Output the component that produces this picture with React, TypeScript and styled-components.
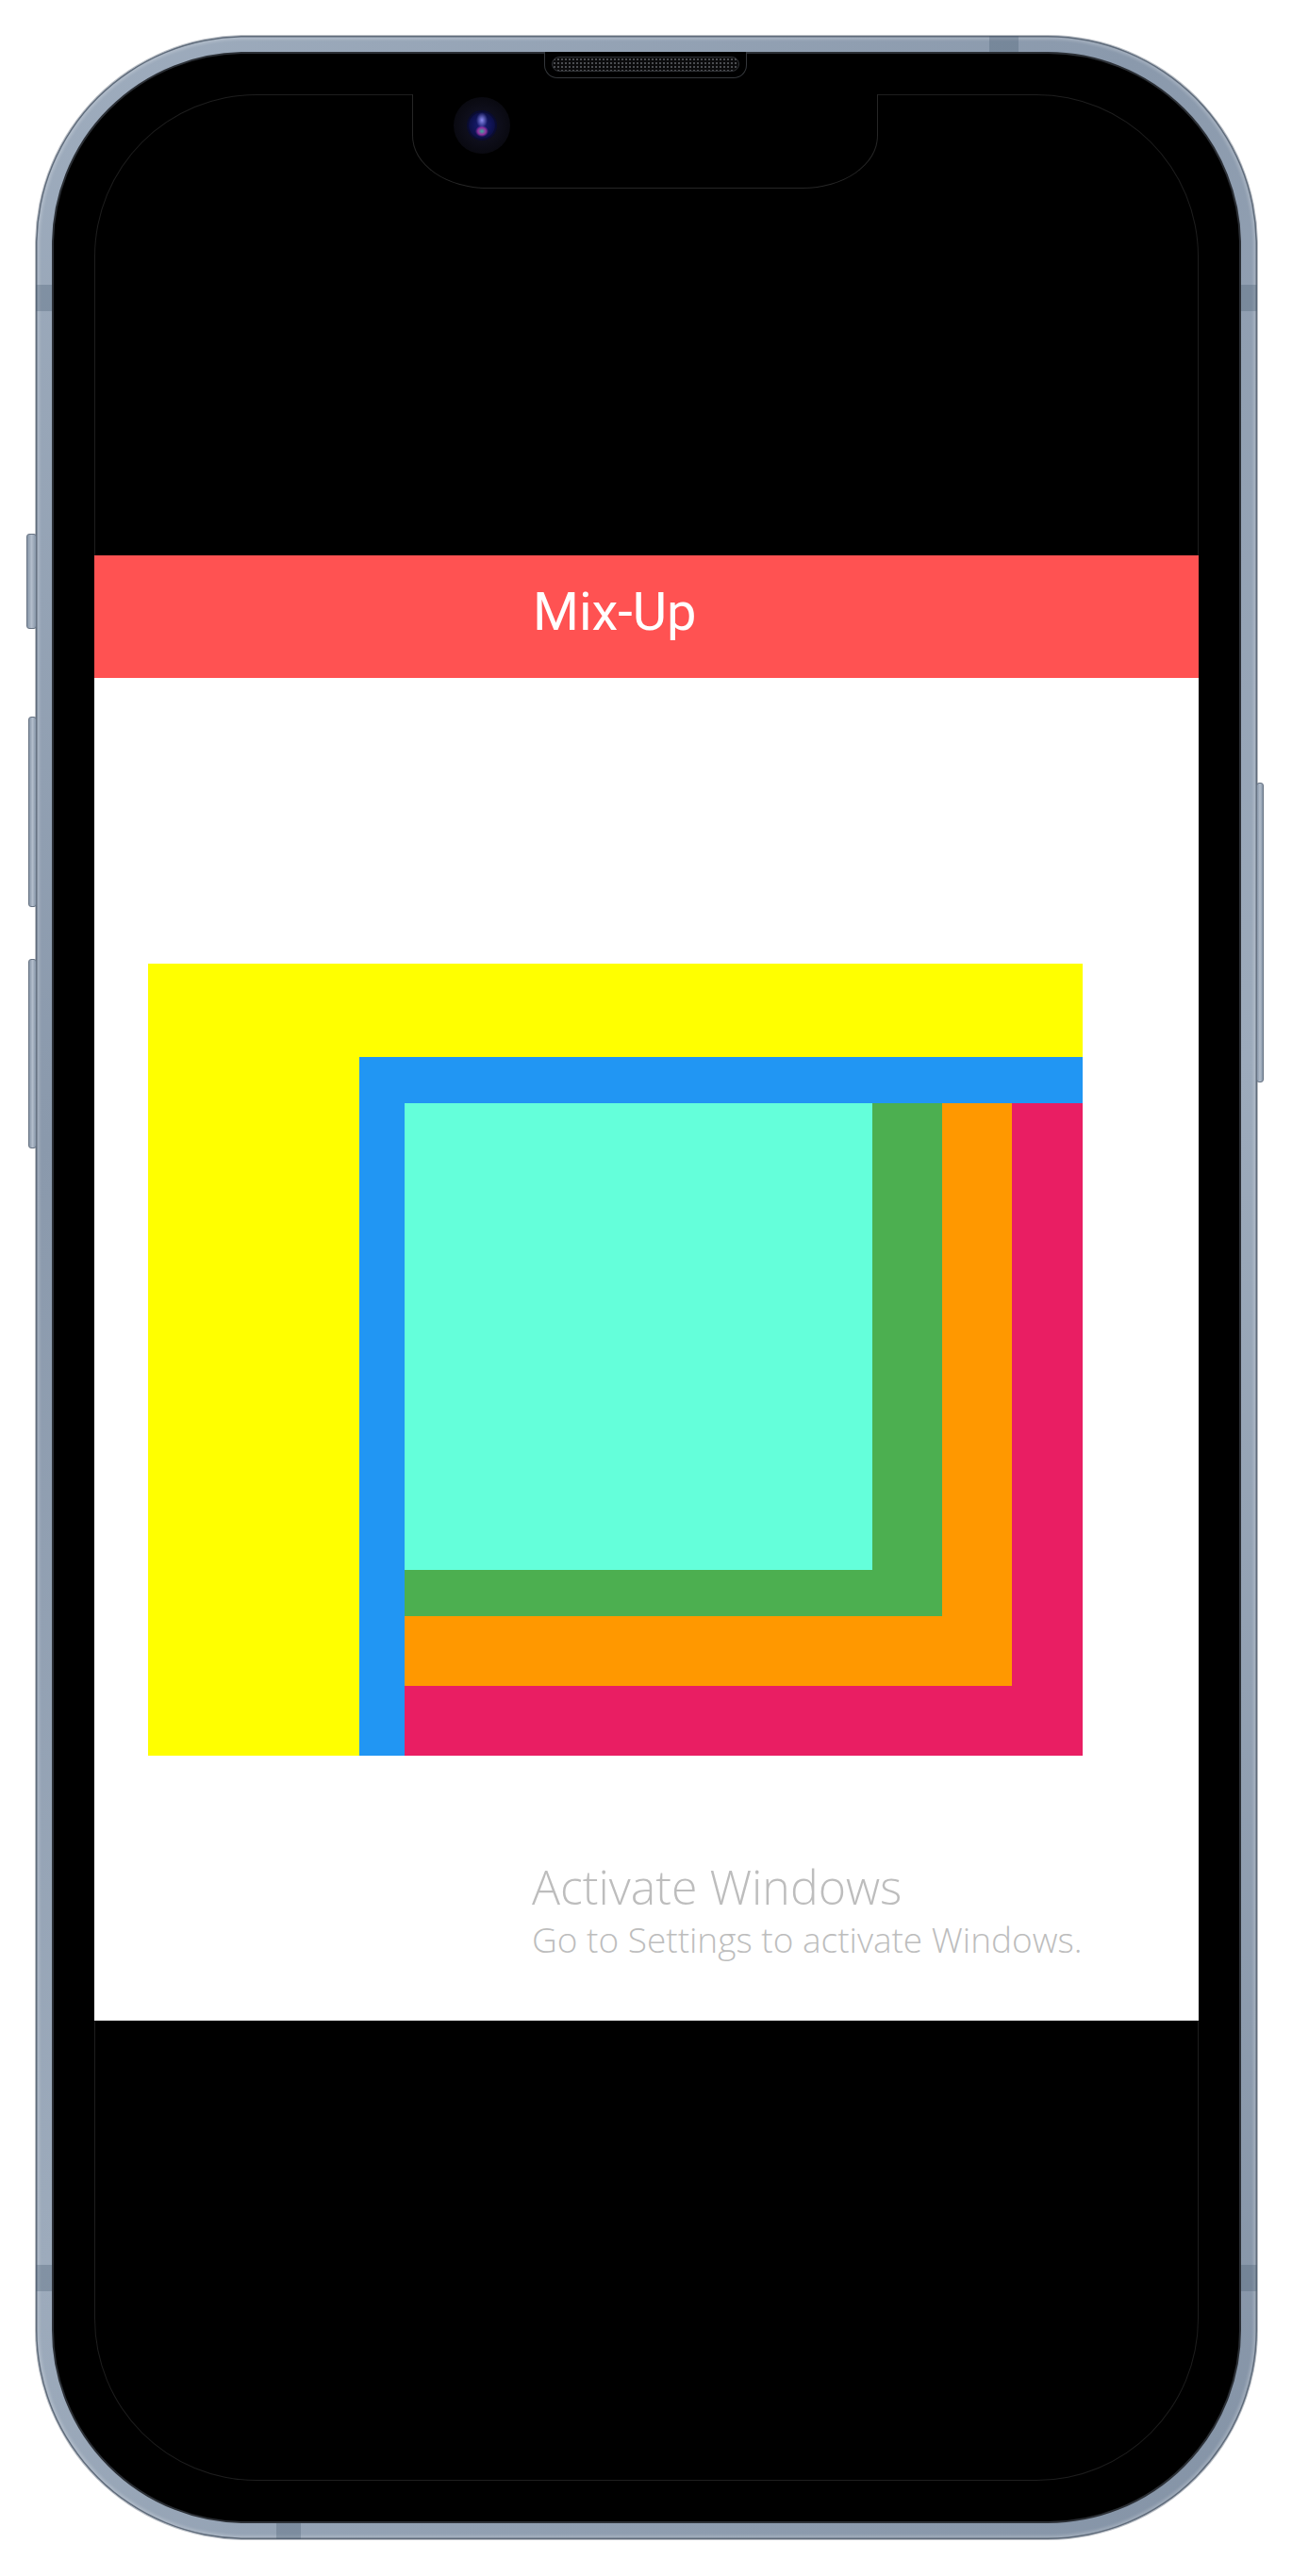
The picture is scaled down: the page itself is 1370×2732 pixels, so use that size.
import React from "react";
import { styled, createGlobalStyle } from "styled-components";

const GlobalStyle = createGlobalStyle`
  html, body {
    margin: 0;
    padding: 0;
    background: #ffffff;
  }

  body {
    width: 1370px;
    height: 2732px;
    overflow: hidden;
    font-family: Roboto, "Noto Sans", sans-serif;
  }
`;

const layers = [
  { color: "#E91E63", w: 719, h: 692 },
  { color: "#FF9800", w: 644, h: 618 },
  { color: "#4CAF50", w: 570, h: 544 },
  { color: "#64FFDA", w: 496, h: 495 },
];

const buttons = [
  { side: "left", offset: -10, width: 11, top: 528, height: 101 },
  { side: "left", offset: -8, width: 9, top: 722, height: 202 },
  { side: "left", offset: -8, width: 9, top: 979, height: 201 },
  { side: "right", offset: -7, width: 8, top: 792, height: 318 },
] as const;

const bands = [
  { top: 0, left: 1011, width: 31, height: 17 },
  { top: 264, left: 0, width: 17, height: 28 },
  { top: 264, left: 1278, width: 17, height: 28 },
  { top: 2364, left: 0, width: 17, height: 28 },
  { top: 2364, left: 1278, width: 17, height: 28 },
  { top: 2638, left: 255, width: 26, height: 17 },
];

// nests the coloured layers, each one pinned to the top-left of its parent
const renderLayers = (index: number): React.ReactNode => {
  const layer = layers[index];
  if (!layer) return null;
  return (
    <StyledLayer $color={layer.color} $w={layer.w} $h={layer.h}>
      {renderLayers(index + 1)}
    </StyledLayer>
  );
};

const App = () => {
  return (
    <>
      <GlobalStyle />
      <StyledPage>
        <StyledPhone>
          {buttons.map((b, i) => (
            <StyledSideButton
              key={i}
              $side={b.side}
              $offset={b.offset}
              $width={b.width}
              $top={b.top}
              $height={b.height}
            />
          ))}
          {bands.map((b, i) => (
            <StyledBand
              key={i}
              $top={b.top}
              $left={b.left}
              $width={b.width}
              $height={b.height}
            />
          ))}

          <StyledBezel>
            <StyledSpeaker>
              <StyledGrille />
            </StyledSpeaker>

            <StyledDisplay>
              <StyledNotch>
                <StyledCamera>
                  <StyledLens />
                </StyledCamera>
              </StyledNotch>

              <StyledApp>
                <StyledAppBar>
                  <StyledTitle>Mix-Up</StyledTitle>
                </StyledAppBar>

                <StyledBody>
                  <StyledOuter>
                    <StyledInset>{renderLayers(0)}</StyledInset>
                  </StyledOuter>

                  <StyledWatermark>
                    <StyledWatermarkTitle>Activate Windows</StyledWatermarkTitle>
                    <StyledWatermarkText>
                      Go to Settings to activate Windows.
                    </StyledWatermarkText>
                  </StyledWatermark>
                </StyledBody>
              </StyledApp>
            </StyledDisplay>
          </StyledBezel>
        </StyledPhone>
      </StyledPage>
    </>
  );
};

export default App;

const StyledPage = styled("div")`
  width: 1370px;
  height: 2732px;
  box-sizing: border-box;
  padding: 38px 0 0 38px;
  background: #ffffff;
`;

const StyledPhone = styled("div")`
  position: relative;
  width: 1295px;
  height: 2655px;
  box-sizing: border-box;
  padding: 17px;

  border-radius: 222px;
  background: linear-gradient(135deg, #9fadbe 0%, #8a99ac 30%, #9dabbc 60%, #8493a6 100%);
  box-shadow:
    inset 0 0 0 1.5px #5f6b7a,
    inset 0 0 3px 4px rgba(255, 255, 255, 0.2),
    0 0 0 1px rgba(80, 90, 105, 0.4);
`;

const StyledSideButton = styled("div")<{
  $side: "left" | "right";
  $offset: number;
  $width: number;
  $top: number;
  $height: number;
}>`
  position: absolute;
  ${(p) => p.$side}: ${(p) => p.$offset}px;
  top: ${(p) => p.$top}px;
  width: ${(p) => p.$width}px;
  height: ${(p) => p.$height}px;

  box-sizing: border-box;
  border: 1px solid #667282;
  border-radius: 3px;
  background: linear-gradient(90deg, #8796a8, #b2bdcb, #8796a8);
`;

const StyledBand = styled("div")<{
  $top: number;
  $left: number;
  $width: number;
  $height: number;
}>`
  position: absolute;
  top: ${(p) => p.$top}px;
  left: ${(p) => p.$left}px;
  width: ${(p) => p.$width}px;
  height: ${(p) => p.$height}px;
  background: rgba(70, 88, 110, 0.3);
`;

const StyledBezel = styled("div")`
  position: relative;
  height: 100%;
  box-sizing: border-box;
  padding: 43px;

  border: 2px solid #2b2f35;
  border-radius: 205px;
  background: #000000;
`;

const StyledSpeaker = styled("div")`
  position: absolute;
  top: -2px;
  left: 520px;
  width: 215px;
  height: 28px;
  box-sizing: border-box;
  padding: 5px 7px 6px;

  background: #000000;
  border: 1px solid #34373b;
  border-top: none;
  border-radius: 0 0 14px 14px;
`;

const StyledGrille = styled("div")`
  height: 100%;
  box-sizing: border-box;
  border: 1px solid #303236;
  border-radius: 8px;
  background:
    radial-gradient(circle, #4b4d51 0.9px, transparent 1.3px) 0 0 / 4px 4px,
    #0b0b0c;
`;

const StyledDisplay = styled("div")`
  position: relative;
  height: 100%;
  display: flex;
  flex-direction: column;
  justify-content: center;

  border-radius: 172px;
  background: #000000;
  box-shadow: inset 0 0 0 1px #1e1e1e;
`;

const StyledNotch = styled("div")`
  position: absolute;
  top: 0;
  left: 337px;
  width: 494px;
  height: 100px;
  box-sizing: border-box;

  background: #000000;
  border: 1px solid #262626;
  border-top: none;
  border-radius: 0 0 80px 80px / 0 0 56px 56px;
`;

const StyledCamera = styled("div")`
  position: absolute;
  top: 3px;
  left: 43px;
  width: 60px;
  height: 60px;
  display: flex;
  align-items: center;
  justify-content: center;

  border-radius: 50%;
  background: radial-gradient(circle, #15152a 0%, #0b0b14 60%, #050507 100%);
`;

const StyledLens = styled("div")`
  width: 28px;
  height: 28px;
  border-radius: 50%;
  background:
    radial-gradient(ellipse 6px 8px at 50% 30%, #8c8cf0 0%, transparent 100%),
    radial-gradient(ellipse 7px 6px at 50% 72%, #38b09a 0%, #9030a0 60%, transparent 100%),
    radial-gradient(circle, #1a1f7a 0%, #0c0f45 70%, #05061a 100%);
  box-shadow: 0 0 0 2px #0a0c30;
`;

const StyledApp = styled("div")`
  flex-shrink: 0;
  height: 1554px;
  display: flex;
  flex-direction: column;
`;

const StyledAppBar = styled("div")`
  height: 130px;
  box-sizing: border-box;
  padding: 0 0 10px 465px;
  display: flex;
  align-items: center;

  background: #ff5252;
`;

const StyledTitle = styled("span")`
  font-family: Roboto, "Noto Sans", sans-serif;
  font-size: 56px;
  font-weight: 400;
  color: #ffffff;
`;

const StyledBody = styled("div")`
  flex: 1;
  padding: 303px 0 0 57px;
  display: flex;
  flex-direction: column;
  align-items: flex-start;

  background: #ffffff;
`;

const StyledOuter = styled("div")`
  width: 991px;
  height: 840px;
  display: flex;
  justify-content: flex-end;
  align-items: flex-end;

  background: #ffff00;
`;

const StyledInset = styled("div")`
  width: 767px;
  height: 741px;
  box-sizing: border-box;
  padding: 49px 0 0 48px;

  background: #2196f3;
`;

const StyledLayer = styled("div")<{ $color: string; $w: number; $h: number }>`
  width: ${(p) => p.$w}px;
  height: ${(p) => p.$h}px;
  display: flex;
  align-items: flex-start;
  justify-content: flex-start;

  background: ${(p) => p.$color};
`;

const StyledWatermark = styled("div")`
  margin: 111px 0 0 407px;
  display: flex;
  flex-direction: column;
  gap: 6px;

  font-family: "Open Sans", "Noto Sans", sans-serif;
  font-weight: 300;
  color: #bdbdbd;
`;

const StyledWatermarkTitle = styled("div")`
  font-size: 50px;
  line-height: 56px;
  white-space: nowrap;
`;

const StyledWatermarkText = styled("div")`
  font-size: 37px;
  line-height: 44px;
  white-space: nowrap;
`;
